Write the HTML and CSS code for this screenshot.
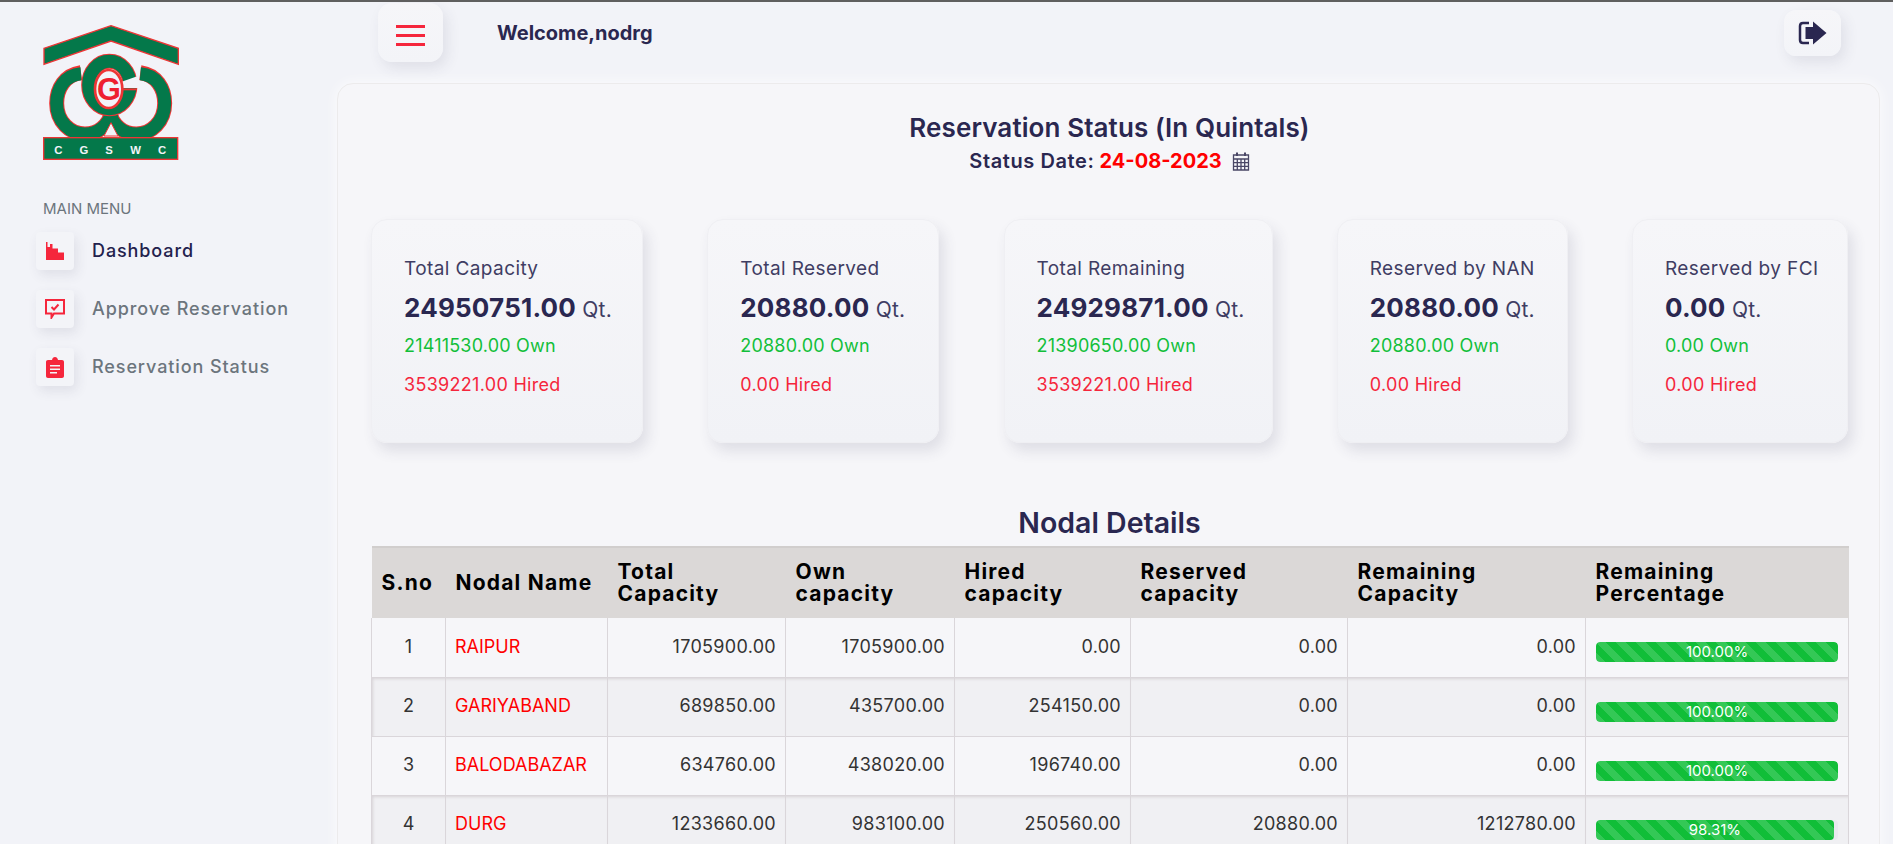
FILE: index.html
```html
<!DOCTYPE html>
<html lang="en">
<head>
    <meta charset="UTF-8">
    <meta name="viewport" content="width=device-width, initial-scale=1.0">
    <title>Reservation Status</title>
    <link rel="stylesheet" href="styles.css">
</head>
<body>
    <div class="page">
        <aside class="sidebar">
            <svg class="logo" viewBox="69 45 408 405">
                <path class="ring-edge" d="M183 188 C135 195 110 235 110 280 C110 335 150 372 195 372 C235 372 265 345 275 310"/>
                <path class="ring-edge" d="M361 188 C409 195 434 235 434 280 C434 335 394 372 349 372 C309 372 279 345 269 310"/>
                <path class="ring-fill" d="M183 191 C135 195 110 235 110 280 C110 335 150 372 195 372 C235 372 265 345 275 310"/>
                <path class="ring-fill" d="M361 191 C409 195 434 235 434 280 C434 335 394 372 349 372 C309 372 279 345 269 310"/>
                <polygon class="logo-gap" points="273,338 252,378 294,378"/>
                <ellipse class="top-edge" cx="268" cy="225" rx="62" ry="71"/>
                <ellipse class="top-fill" cx="268" cy="225" rx="62" ry="71"/>
                <polygon class="logo-notch" points="305,215 354,198 354,234 305,234"/>
                <path class="logo-line" d="M300 238 H350"/>
                <ellipse class="logo-hole" cx="266" cy="237" rx="41" ry="57"/>
                <text class="logo-g" x="267" y="270">G</text>
                <polygon class="logo-shape" points="72,115 273,47 475,115 475,163 273,93 72,163"/>
                <rect class="logo-shape" x="71" y="383" width="402" height="65"/>
                <text class="logo-letter" x="115" y="431">C</text>
                <text class="logo-letter" x="192" y="431">G</text>
                <text class="logo-letter" x="267" y="431">S</text>
                <text class="logo-letter" x="347" y="431">W</text>
                <text class="logo-letter" x="426" y="431">C</text>
            </svg>
            <div class="menu-title">MAIN MENU</div>
            <nav class="menu">
                <a class="menu-item active" href="#">
                    <span class="menu-icon">
                        <svg viewBox="0 0 18 18" width="18" height="18"><path d="M0 0H1.5V5H4V2H6.5V6.500H10V6.500H12V10.500H18V18H0Z"/></svg>
                    </span>
                    Dashboard
                </a>
                <a class="menu-item" href="#">
                    <span class="menu-icon">
                        <svg viewBox="0 0 20 20" width="20" height="20"><path class="icon-line" d="M1 1H19V14.500H9L6.500 18.500V14.500H1Z"/><path class="icon-line" d="M6.500 8L9 10.500L13.500 5.500"/></svg>
                    </span>
                    Approve Reservation
                </a>
                <a class="menu-item" href="#">
                    <span class="menu-icon">
                        <svg viewBox="0 0 18 21" width="18" height="21"><path fill-rule="evenodd" d="M2 3H6C6.300 1 7.500 0 9 0S11.700 1 12 3H16C17.200 3 18 3.800 18 5V19C18 20.200 17.200 21 16 21H2C.8 21 0 20.200 0 19V5C0 3.800 .8 3 2 3ZM4 8V9.500H14V8ZM4 11.500V13H14V11.500ZM4 15V16.500H11V15Z"/></svg>
                    </span>
                    Reservation Status
                </a>
            </nav>
        </aside>

        <main class="main">
            <header class="topbar">
                <button class="top-btn menu-btn" type="button">
                    <span></span><span></span><span></span>
                </button>
                <div class="welcome">Welcome,nodrg</div>
                <button class="top-btn logout-btn" type="button">
                    <svg viewBox="0 0 29 24" width="29" height="24"><path d="M15 6H7.500V18H15Z M15 6V.5L28.500 12L15 23.500V6Z"/><path class="logout-door" d="M11 2H5C3 2 2 3 2 5V19C2 21 3 22 5 22H11"/></svg>
                </button>
            </header>

            <section class="content">
                <h1>Reservation Status (In Quintals)</h1>
                <div class="status-date">
                    <span class="date-label">Status Date:</span> <span class="date-red">24-08-2023</span>
                    <svg class="calendar" viewBox="0 0 18 19" width="18" height="19"><path d="M1.500 3H16.500V18H1.500Z M1.500 7H16.500 M1.500 10.700H16.500 M1.500 14.300H16.500 M5.300 7V18 M9 7V18 M12.700 7V18"/><path class="calendar-ring" d="M5 .5V4 M13 .5V4"/></svg>
                </div>

                <div class="cards">
                    <div class="stat-card">
                        <div class="stat-label">Total Capacity</div>
                        <div class="stat-value">24950751.00 <small>Qt.</small></div>
                        <div class="stat-own">21411530.00 Own</div>
                        <div class="stat-hired">3539221.00 Hired</div>
                    </div>
                    <div class="stat-card">
                        <div class="stat-label">Total Reserved</div>
                        <div class="stat-value">20880.00 <small>Qt.</small></div>
                        <div class="stat-own">20880.00 Own</div>
                        <div class="stat-hired">0.00 Hired</div>
                    </div>
                    <div class="stat-card">
                        <div class="stat-label">Total Remaining</div>
                        <div class="stat-value">24929871.00 <small>Qt.</small></div>
                        <div class="stat-own">21390650.00 Own</div>
                        <div class="stat-hired">3539221.00 Hired</div>
                    </div>
                    <div class="stat-card">
                        <div class="stat-label">Reserved by NAN</div>
                        <div class="stat-value">20880.00 <small>Qt.</small></div>
                        <div class="stat-own">20880.00 Own</div>
                        <div class="stat-hired">0.00 Hired</div>
                    </div>
                    <div class="stat-card">
                        <div class="stat-label">Reserved by FCI</div>
                        <div class="stat-value">0.00 <small>Qt.</small></div>
                        <div class="stat-own">0.00 Own</div>
                        <div class="stat-hired">0.00 Hired</div>
                    </div>
                </div>

                <h2>Nodal Details</h2>
                <table class="nodal-table">
                    <colgroup>
                        <col class="col-sno"><col class="col-name"><col class="col-total"><col class="col-own">
                        <col class="col-hired"><col class="col-reserved"><col class="col-remaining"><col class="col-percent">
                    </colgroup>
                    <thead>
                        <tr>
                            <th>S.no</th>
                            <th>Nodal Name</th>
                            <th>Total<br>Capacity</th>
                            <th>Own<br>capacity</th>
                            <th>Hired<br>capacity</th>
                            <th>Reserved<br>capacity</th>
                            <th>Remaining<br>Capacity</th>
                            <th>Remaining<br>Percentage</th>
                        </tr>
                    </thead>
                    <tbody>
                        <tr>
                            <td class="sno">1</td><td class="name">RAIPUR</td>
                            <td class="num">1705900.00</td><td class="num">1705900.00</td><td class="num">0.00</td>
                            <td class="num">0.00</td><td class="num">0.00</td>
                            <td class="percent"><div class="progress"><div class="progress-bar" style="width: 100%">100.00%</div></div></td>
                        </tr>
                        <tr>
                            <td class="sno">2</td><td class="name">GARIYABAND</td>
                            <td class="num">689850.00</td><td class="num">435700.00</td><td class="num">254150.00</td>
                            <td class="num">0.00</td><td class="num">0.00</td>
                            <td class="percent"><div class="progress"><div class="progress-bar" style="width: 100%">100.00%</div></div></td>
                        </tr>
                        <tr>
                            <td class="sno">3</td><td class="name">BALODABAZAR</td>
                            <td class="num">634760.00</td><td class="num">438020.00</td><td class="num">196740.00</td>
                            <td class="num">0.00</td><td class="num">0.00</td>
                            <td class="percent"><div class="progress"><div class="progress-bar" style="width: 100%">100.00%</div></div></td>
                        </tr>
                        <tr>
                            <td class="sno">4</td><td class="name">DURG</td>
                            <td class="num">1233660.00</td><td class="num">983100.00</td><td class="num">250560.00</td>
                            <td class="num">20880.00</td><td class="num">1212780.00</td>
                            <td class="percent"><div class="progress"><div class="progress-bar" style="width: 98.31%">98.31%</div></div></td>
                        </tr>
                    </tbody>
                </table>
            </section>
        </main>
    </div>
</body>
</html>
```

FILE: styles.css
```css
* {
    box-sizing: border-box;
}

html, body {
    height: 100%;
}

body {
    margin: 0;
    overflow: hidden;
    background-color: #f2f3f8;
    border-top: 2px solid #5f5f5f;
    font-family: "Inter", "Open Sans", sans-serif;
    color: #2a2750;
}

.page {
    display: flex;
    height: 842px;
    overflow: hidden;
}

/* sidebar */
.sidebar {
    flex: 0 0 337px;
    padding: 23px 0 0 36px;
}

.logo {
    display: block;
    width: 136px;
    height: 135px;
    margin-left: 7px;
}

.ring-edge, .ring-fill, .top-edge, .top-fill {
    fill: none;
}

.ring-edge, .top-edge {
    stroke: #ee3535;
    stroke-width: 45;
}

.ring-fill, .top-fill {
    stroke: #04784a;
    stroke-width: 39;
}

.logo-gap {
    fill: #f2f3f8;
    stroke: #ee3535;
    stroke-width: 3;
}

.logo-notch {
    fill: #f2f3f8;
}

.logo-line {
    fill: none;
    stroke: #ee3535;
    stroke-width: 6;
}

.logo-hole {
    fill: #f2f3f8;
    stroke: #ee3535;
    stroke-width: 8;
}

.logo-g {
    fill: #ee2030;
    font-family: "Liberation Sans", sans-serif;
    font-size: 92px;
    font-weight: 700;
    text-anchor: middle;
}

.logo-shape {
    fill: #04784a;
    stroke: #ee3535;
    stroke-width: 4;
}

.logo-letter {
    fill: #f2f3f8;
    font-family: "Liberation Sans", sans-serif;
    font-size: 34px;
    font-weight: 700;
    text-anchor: middle;
}

.menu-title {
    margin: 39px 0 0 7px;
    font-size: 15px;
    line-height: 20px;
    color: #6c757d;
}

.menu {
    margin-top: 13px;
}

.menu-item {
    display: flex;
    align-items: center;
    gap: 18px;
    height: 38px;
    margin-bottom: 20px;
    font-size: 18px;
    font-weight: 500;
    letter-spacing: 0.9px;
    line-height: 34px;
    color: #6c757d;
    text-decoration: none;
    white-space: nowrap;
}

.menu-item.active {
    color: #23214d;
}

.menu-icon {
    display: flex;
    align-items: center;
    justify-content: center;
    width: 38px;
    height: 38px;
    border-radius: 4px;
    background-color: #f3f4f8;
    box-shadow: 3px 5px 12px rgba(60, 60, 90, 0.1);
}

.menu-icon svg {
    fill: #f5263c;
}

.menu-icon .icon-line {
    fill: none;
    stroke: #f5263c;
    stroke-width: 2;
}

/* top bar */
.main {
    flex: 1;
    min-width: 0;
    padding-right: 13px;
}

.topbar {
    display: flex;
    align-items: flex-start;
    height: 81px;
    padding: 1px 39px 0 41px;
}

.top-btn {
    border: none;
    padding: 0;
    cursor: pointer;
    background: linear-gradient(180deg, #f6f6f9, #f3f4f8);
    box-shadow: 4px 6px 14px rgba(60, 60, 90, 0.1);
}

.menu-btn {
    display: flex;
    flex-direction: column;
    align-items: center;
    justify-content: center;
    gap: 6px;
    width: 65px;
    height: 59px;
    padding-top: 6px;
    border-radius: 14px;
}

.menu-btn span {
    display: block;
    width: 29px;
    height: 3px;
    background-color: #f5263c;
}

.welcome {
    margin: 19px 0 0 54px;
    font-size: 20px;
    line-height: 22px;
    font-weight: 700;
}

.logout-btn {
    display: flex;
    align-items: center;
    justify-content: center;
    width: 57px;
    height: 46px;
    margin: 7px 0 0 auto;
    border-radius: 12px;
}

.logout-btn svg {
    fill: #2a2750;
}

.logout-btn .logout-door {
    fill: none;
    stroke: #2a2750;
    stroke-width: 2.500;
}

/* content */
.content {
    height: 800px;
    padding: 26px 31px 0 33px;
    background-color: #f6f6f9;
    border: 1px solid #ecebec;
    border-radius: 16px;
    box-shadow: 0 0 14px rgba(255, 255, 255, 0.8);
}

h1 {
    margin: 0;
    font-size: 26px;
    line-height: 36px;
    font-weight: 600;
    letter-spacing: 0.1px;
    text-align: center;
}

.status-date {
    display: flex;
    justify-content: center;
    align-items: center;
    gap: 5px;
    height: 30px;
    font-size: 20px;
    font-weight: 700;
}

.date-label {
    font-weight: 600;
    letter-spacing: 0.6px;
}

.date-red {
    color: #ff0000;
}

.calendar {
    margin-left: 5px;
    fill: none;
    stroke: #4a4766;
    stroke-width: 1.300;
}

.calendar .calendar-ring {
    stroke-width: 2;
}

.cards {
    display: grid;
    grid-template-columns: 272px 232px 269px 231px 216px;
    justify-content: space-between;
    margin-top: 43px;
}

.stat-card {
    height: 224px;
    padding: 36px 0 0 32px;
    border: 1px solid #efeff3;
    border-radius: 16px;
    background: linear-gradient(180deg, #f6f6f9, #f1f2f6);
    box-shadow: 5px 8px 14px rgba(60, 60, 90, 0.12);
}

.stat-label {
    font-size: 19px;
    line-height: 26px;
    letter-spacing: 0.4px;
    color: #3f3d63;
}

.stat-value {
    margin-top: 8px;
    font-size: 26px;
    line-height: 36px;
    font-weight: 700;
    letter-spacing: 0.2px;
    white-space: nowrap;
}

.stat-value small {
    font-size: 21px;
    font-weight: 400;
    color: #3f3d63;
}

.stat-own {
    margin-top: 5px;
    font-size: 18px;
    line-height: 26px;
    letter-spacing: 0.2px;
    color: #12bf3a;
}

.stat-hired {
    margin-top: 13px;
    font-size: 18px;
    line-height: 26px;
    letter-spacing: 0.3px;
    color: #f5263c;
}

h2 {
    margin: 62px 0 0;
    font-size: 28.500px;
    line-height: 36px;
    font-weight: 600;
    text-align: center;
}

/* table */
.nodal-table {
    width: 1477px;
    margin-top: 5px;
    border-collapse: collapse;
    table-layout: fixed;
}

.col-sno { width: 74px; }
.col-name { width: 162px; }
.col-total { width: 178px; }
.col-own { width: 169px; }
.col-hired { width: 176px; }
.col-reserved { width: 217px; }
.col-remaining { width: 238px; }
.col-percent { width: 263px; }

.nodal-table th {
    height: 71px;
    padding: 0 10px;
    background-color: #dbd8d7;
    border-top: 2px solid #d1cecd;
    font-size: 21px;
    line-height: 22px;
    font-weight: 700;
    letter-spacing: 1.200px;
    text-align: left;
    color: #000;
}

.nodal-table td {
    height: 59px;
    padding: 0 10px 2px;
    border: 1px solid #dad6da;
    border-top: none;
    font-size: 18px;
    color: #333;
}

.nodal-table tbody tr:nth-child(even) td {
    background-color: #f0f0f3;
    box-shadow: inset 0 3px 3px -2px rgba(120, 100, 110, 0.2);
}

.nodal-table tbody tr:nth-child(even) td.sno {
    box-shadow: inset 3px 3px 3px -2px rgba(120, 100, 110, 0.2);
}

.nodal-table .sno {
    text-align: center;
}

.nodal-table .name {
    padding-left: 9px;
    color: #ff0000;
}

.nodal-table .num {
    padding-right: 9px;
    letter-spacing: 0.3px;
    text-align: right;
}

.nodal-table .percent {
    padding-top: 12px;
}

.progress {
    height: 20px;
    border-radius: 4px;
    background-color: #e9e9ef;
    overflow: hidden;
}

.progress-bar {
    height: 100%;
    border-radius: 4px;
    background-color: #11be38;
    background-image: linear-gradient(45deg, rgba(255, 255, 255, 0.15) 25%, transparent 25%, transparent 50%, rgba(255, 255, 255, 0.15) 50%, rgba(255, 255, 255, 0.15) 75%, transparent 75%, transparent);
    background-size: 20px 20px;
    font-size: 15px;
    line-height: 20px;
    text-align: center;
    color: #fff;
}
```
